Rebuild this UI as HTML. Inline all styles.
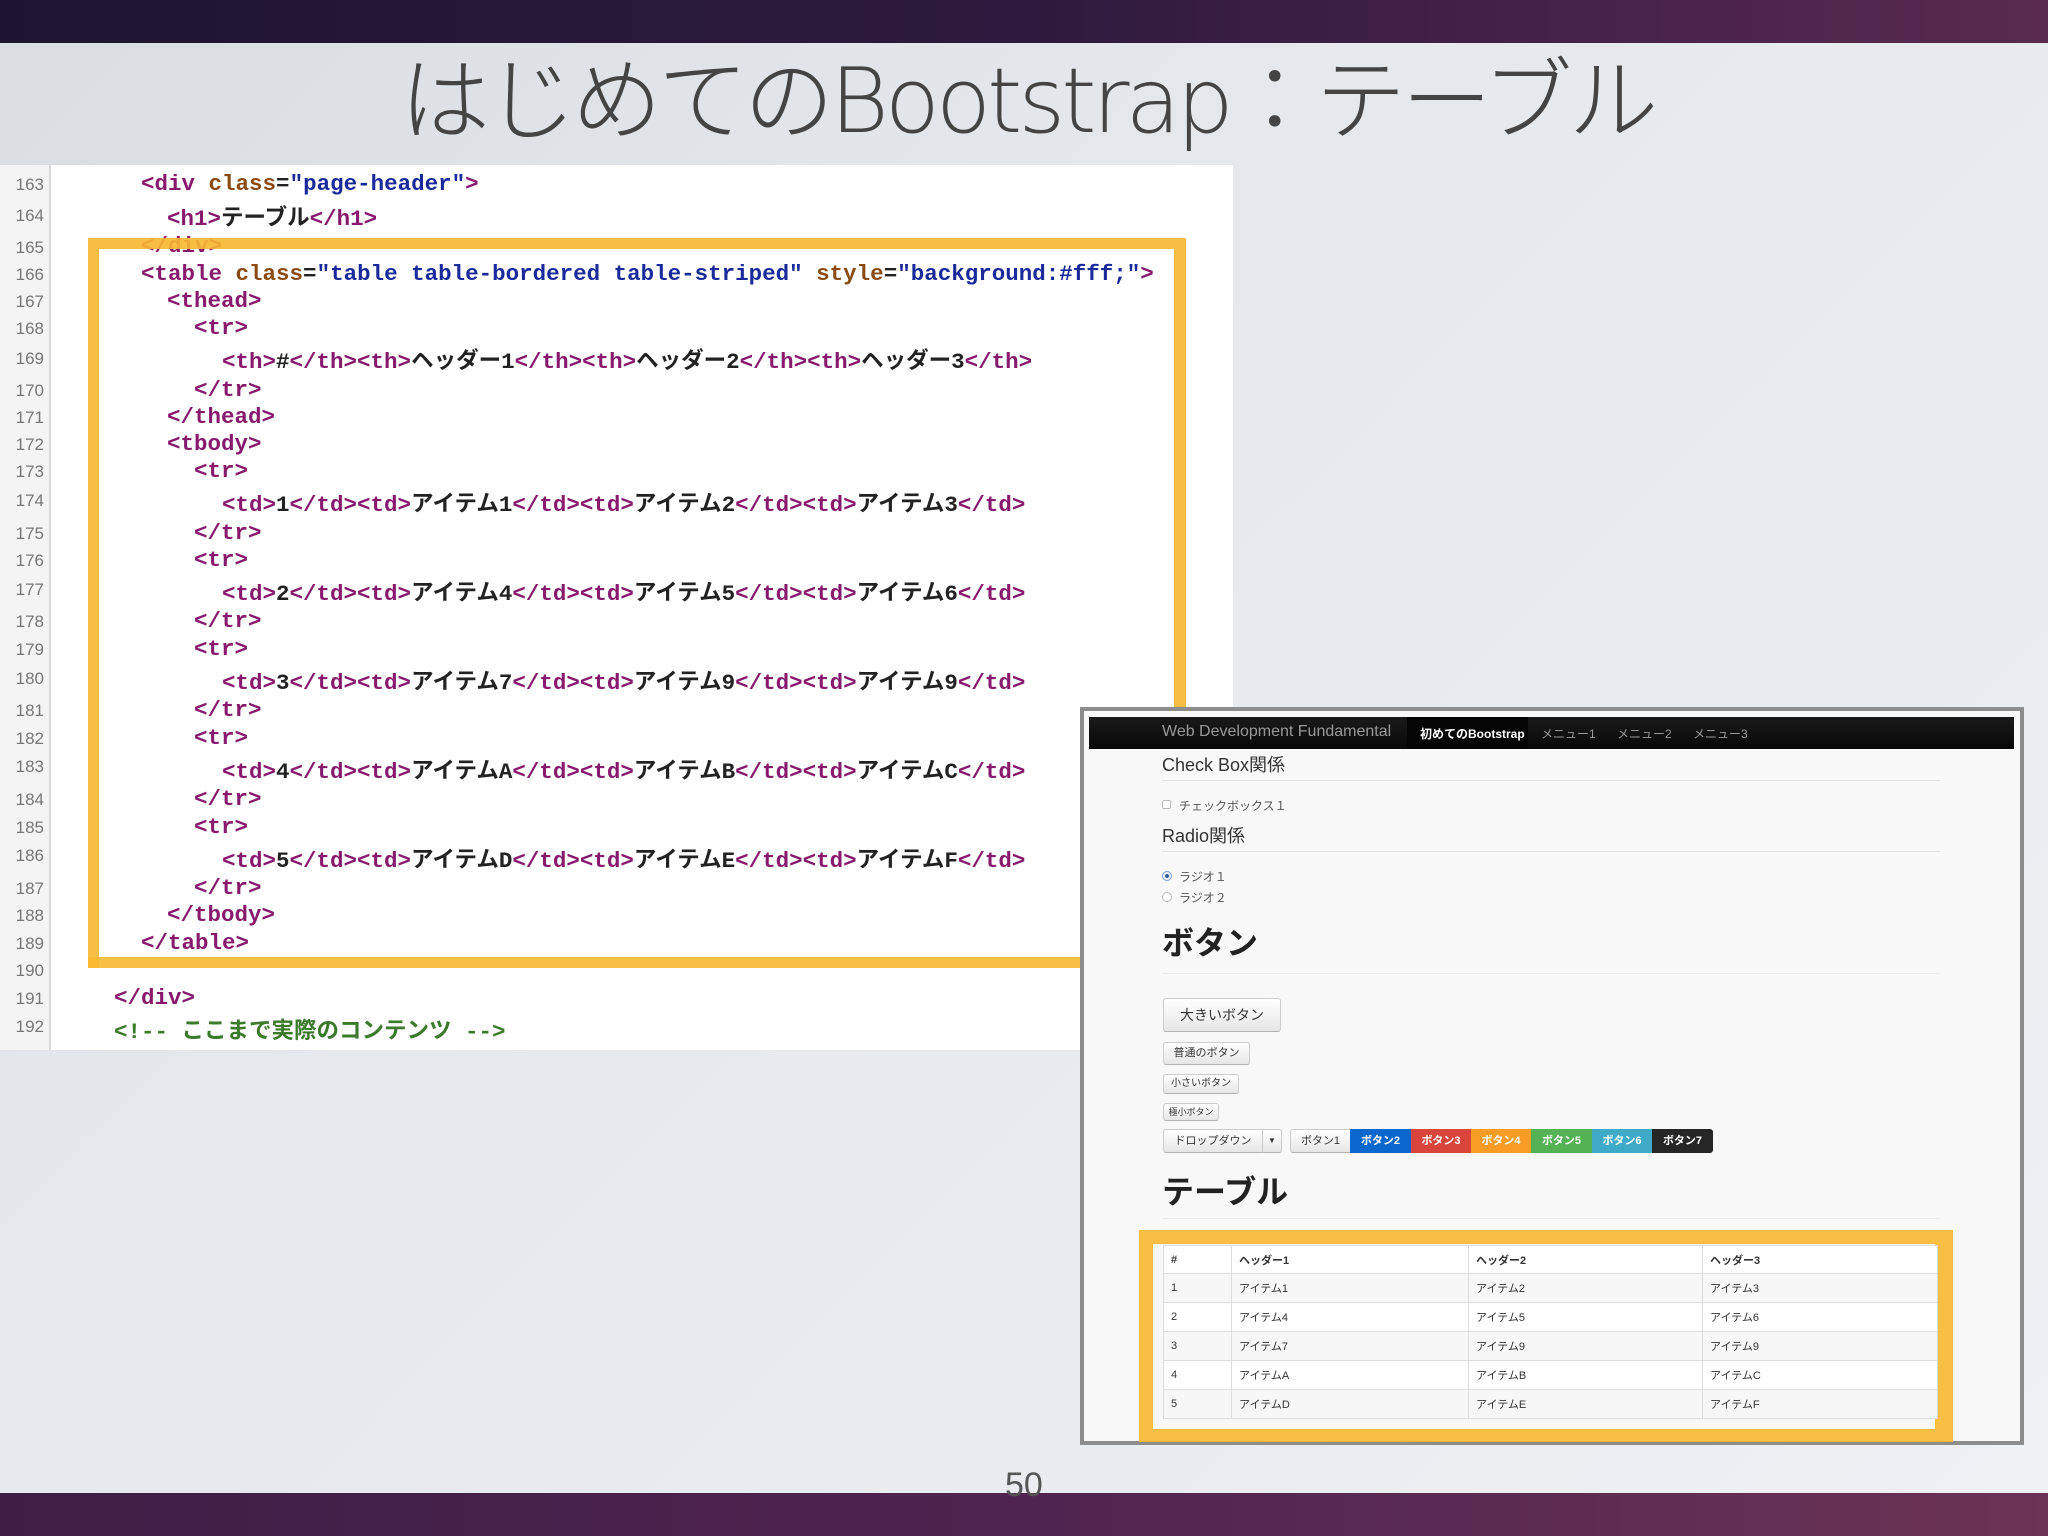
<!DOCTYPE html>
<html><head><meta charset="utf-8">
<style>
*{margin:0;padding:0;box-sizing:border-box}
body{width:2048px;height:1536px;position:relative;overflow:hidden;background:linear-gradient(135deg,#d9dde2 0%,#e6e9ec 40%,#eef0f2 100%);font-family:"Liberation Sans","Noto Sans CJK JP",sans-serif}
.top{position:absolute;left:0;top:0;width:2048px;height:43px;background:linear-gradient(90deg,#1d1530,#2e1a3e 50%,#5a2a50)}
.bot{position:absolute;left:0;top:1493px;width:2048px;height:43px;background:linear-gradient(90deg,#3d1f46,#4f2450 50%,#6b3355)}
.title{position:absolute;left:400px;top:42px;font-size:90px;font-weight:200;color:#444;white-space:nowrap;letter-spacing:-4px;font-family:"DejaVu Sans","Noto Sans CJK JP",sans-serif;line-height:120px}
.code{position:absolute;left:0;top:165px;width:1233px;height:885px;background:#fff}
.gut{position:absolute;left:0;top:165px;width:51px;height:885px;background:#f4f4f4;border-right:2px solid #d8d8d8}
.ln{position:absolute;left:0;width:44px;text-align:right;font:17px "Liberation Sans",sans-serif;color:#777}
.cl{position:absolute;white-space:pre;font:600 22.5px "Liberation Mono","Noto Sans CJK JP",monospace;color:#222;letter-spacing:0}
.t{color:#881a6e}.a{color:#8a4a12}.v{color:#1a2a9a}.c{color:#3a7a2a}
.hl{position:absolute;border:11px solid #f8b830;opacity:.9}
.inset{position:absolute;left:1080px;top:707px;width:944px;height:738px;background:#f8f8f9;border:4px solid #8d8d8d}
.nav{position:absolute;left:1089px;top:717px;width:925px;height:32px;background:linear-gradient(#1a1a1a,#080808)}
.nav span{position:absolute;top:7px;font-size:13px;color:#999;white-space:nowrap}
.h{position:absolute;left:1162px;color:#333;white-space:nowrap}
.hr{position:absolute;left:1162px;width:778px;height:1px;background:#e2e2e2}
.btn{position:absolute;background:linear-gradient(#fff,#e6e6e6);border:1px solid #ccc;border-bottom-color:#b3b3b3;border-radius:3px;color:#333;text-align:center;white-space:nowrap}
.bg{position:absolute;top:1129px;height:24px;font-size:11px;color:#fff;text-align:center;line-height:24px;font-weight:bold}
table{position:absolute;left:1163px;top:1245px;width:775px;border-collapse:collapse;background:#fff;font-size:11px;color:#333}
td,th{border:1px solid #ddd;text-align:left;padding:0 7px;height:29px}
th{height:28px}
tr.o td{background:#f7f7f7}
</style></head><body>
<div class="top"></div>
<div class="title">はじめてのBootstrap：テーブル</div>

<div class="code"></div>
<div class="gut"></div>
<div class="ln" style="top:175px">163</div>
<div class="ln" style="top:206px">164</div>
<div class="ln" style="top:238px">165</div>
<div class="ln" style="top:265px">166</div>
<div class="ln" style="top:292px">167</div>
<div class="ln" style="top:319px">168</div>
<div class="ln" style="top:349px">169</div>
<div class="ln" style="top:381px">170</div>
<div class="ln" style="top:408px">171</div>
<div class="ln" style="top:435px">172</div>
<div class="ln" style="top:462px">173</div>
<div class="ln" style="top:491px">174</div>
<div class="ln" style="top:524px">175</div>
<div class="ln" style="top:551px">176</div>
<div class="ln" style="top:580px">177</div>
<div class="ln" style="top:612px">178</div>
<div class="ln" style="top:640px">179</div>
<div class="ln" style="top:669px">180</div>
<div class="ln" style="top:701px">181</div>
<div class="ln" style="top:729px">182</div>
<div class="ln" style="top:757px">183</div>
<div class="ln" style="top:790px">184</div>
<div class="ln" style="top:818px">185</div>
<div class="ln" style="top:846px">186</div>
<div class="ln" style="top:879px">187</div>
<div class="ln" style="top:906px">188</div>
<div class="ln" style="top:934px">189</div>
<div class="ln" style="top:961px">190</div>
<div class="ln" style="top:989px">191</div>
<div class="ln" style="top:1017px">192</div>

<div class="cl" style="left:141px;top:171px"><span class="t">&lt;div</span> <span class="a">class</span>=<span class="v">"page-header"</span><span class="t">&gt;</span></div>
<div class="cl" style="left:167px;top:200px"><span class="t">&lt;h1&gt;</span>テーブル<span class="t">&lt;/h1&gt;</span></div>
<div class="cl" style="left:141px;top:233px"><span class="t">&lt;/div&gt;</span></div>
<div class="cl" style="left:141px;top:261px"><span class="t">&lt;table</span> <span class="a">class</span>=<span class="v">"table table-bordered table-striped"</span> <span class="a">style</span>=<span class="v">"background:#fff;"</span><span class="t">&gt;</span></div>
<div class="cl" style="left:167px;top:288px"><span class="t">&lt;thead&gt;</span></div>
<div class="cl" style="left:194px;top:315px"><span class="t">&lt;tr&gt;</span></div>
<div class="cl" style="left:222px;top:343px"><span class="t">&lt;th&gt;</span>#<span class="t">&lt;/th&gt;&lt;th&gt;</span>ヘッダー1<span class="t">&lt;/th&gt;&lt;th&gt;</span>ヘッダー2<span class="t">&lt;/th&gt;&lt;th&gt;</span>ヘッダー3<span class="t">&lt;/th&gt;</span></div>
<div class="cl" style="left:194px;top:377px"><span class="t">&lt;/tr&gt;</span></div>
<div class="cl" style="left:167px;top:404px"><span class="t">&lt;/thead&gt;</span></div>
<div class="cl" style="left:167px;top:431px"><span class="t">&lt;tbody&gt;</span></div>
<div class="cl" style="left:194px;top:458px"><span class="t">&lt;tr&gt;</span></div>
<div class="cl" style="left:222px;top:486px"><span class="t">&lt;td&gt;</span>1<span class="t">&lt;/td&gt;&lt;td&gt;</span>アイテム1<span class="t">&lt;/td&gt;&lt;td&gt;</span>アイテム2<span class="t">&lt;/td&gt;&lt;td&gt;</span>アイテム3<span class="t">&lt;/td&gt;</span></div>
<div class="cl" style="left:194px;top:520px"><span class="t">&lt;/tr&gt;</span></div>
<div class="cl" style="left:194px;top:547px"><span class="t">&lt;tr&gt;</span></div>
<div class="cl" style="left:222px;top:575px"><span class="t">&lt;td&gt;</span>2<span class="t">&lt;/td&gt;&lt;td&gt;</span>アイテム4<span class="t">&lt;/td&gt;&lt;td&gt;</span>アイテム5<span class="t">&lt;/td&gt;&lt;td&gt;</span>アイテム6<span class="t">&lt;/td&gt;</span></div>
<div class="cl" style="left:194px;top:608px"><span class="t">&lt;/tr&gt;</span></div>
<div class="cl" style="left:194px;top:636px"><span class="t">&lt;tr&gt;</span></div>
<div class="cl" style="left:222px;top:664px"><span class="t">&lt;td&gt;</span>3<span class="t">&lt;/td&gt;&lt;td&gt;</span>アイテム7<span class="t">&lt;/td&gt;&lt;td&gt;</span>アイテム9<span class="t">&lt;/td&gt;&lt;td&gt;</span>アイテム9<span class="t">&lt;/td&gt;</span></div>
<div class="cl" style="left:194px;top:697px"><span class="t">&lt;/tr&gt;</span></div>
<div class="cl" style="left:194px;top:725px"><span class="t">&lt;tr&gt;</span></div>
<div class="cl" style="left:222px;top:753px"><span class="t">&lt;td&gt;</span>4<span class="t">&lt;/td&gt;&lt;td&gt;</span>アイテムA<span class="t">&lt;/td&gt;&lt;td&gt;</span>アイテムB<span class="t">&lt;/td&gt;&lt;td&gt;</span>アイテムC<span class="t">&lt;/td&gt;</span></div>
<div class="cl" style="left:194px;top:786px"><span class="t">&lt;/tr&gt;</span></div>
<div class="cl" style="left:194px;top:814px"><span class="t">&lt;tr&gt;</span></div>
<div class="cl" style="left:222px;top:842px"><span class="t">&lt;td&gt;</span>5<span class="t">&lt;/td&gt;&lt;td&gt;</span>アイテムD<span class="t">&lt;/td&gt;&lt;td&gt;</span>アイテムE<span class="t">&lt;/td&gt;&lt;td&gt;</span>アイテムF<span class="t">&lt;/td&gt;</span></div>
<div class="cl" style="left:194px;top:875px"><span class="t">&lt;/tr&gt;</span></div>
<div class="cl" style="left:167px;top:902px"><span class="t">&lt;/tbody&gt;</span></div>
<div class="cl" style="left:141px;top:930px"><span class="t">&lt;/table&gt;</span></div>
<div class="cl" style="left:114px;top:985px"><span class="t">&lt;/div&gt;</span></div>
<div class="cl c" style="left:114px;top:1013px">&lt;!-- ここまで実際のコンテンツ --&gt;</div>

<div class="hl" style="left:88px;top:238px;width:1098px;height:730px;border-right-width:12px;border-bottom:none"></div>
<div style="position:absolute;left:88px;top:957px;width:998px;height:11px;background:#f8b830;opacity:.9"></div>

<div class="inset"></div>
<div class="nav">
<span style="left:73px;font-size:16px;top:6px">Web Development Fundamental</span>
<div style="position:absolute;left:318px;top:0;width:121px;height:32px;background:#050505"></div>
<span style="left:331px;color:#fff;font-weight:bold;font-size:12px;top:8px">初めてのBootstrap</span>
<span style="left:452px;font-size:12px;top:8px">メニュー1</span>
<span style="left:528px;font-size:12px;top:8px">メニュー2</span>
<span style="left:604px;font-size:12px;top:8px">メニュー3</span>
</div>
<div class="h" style="top:751px;font-size:18px">Check Box関係</div>
<div class="hr" style="top:780px"></div>
<div style="position:absolute;left:1162px;top:800px;width:9px;height:9px;border:1px solid #bbb;border-radius:2px;background:#fff"></div>
<div class="h" style="left:1179px;top:797px;font-size:12px;color:#555">チェックボックス１</div>
<div class="h" style="top:822px;font-size:18px">Radio関係</div>
<div class="hr" style="top:851px"></div>
<div style="position:absolute;left:1162px;top:871px;width:10px;height:10px;border:1px solid #7aa0d0;border-radius:50%;background:radial-gradient(#2a5a9a 30%,#e8f0fa 40%)"></div>
<div class="h" style="left:1179px;top:868px;font-size:12px;color:#555">ラジオ１</div>
<div style="position:absolute;left:1162px;top:892px;width:10px;height:10px;border:1px solid #bbb;border-radius:50%;background:#fff"></div>
<div class="h" style="left:1179px;top:889px;font-size:12px;color:#555">ラジオ２</div>
<div class="h" style="top:918px;font-size:32px;font-weight:bold;color:#222">ボタン</div>
<div class="hr" style="top:973px;background:#ececec"></div>
<div class="btn" style="left:1163px;top:998px;width:118px;height:34px;font-size:14px;line-height:32px">大きいボタン</div>
<div class="btn" style="left:1163px;top:1042px;width:87px;height:23px;font-size:11px;line-height:21px">普通のボタン</div>
<div class="btn" style="left:1163px;top:1074px;width:76px;height:20px;font-size:10px;line-height:18px">小さいボタン</div>
<div class="btn" style="left:1163px;top:1103px;width:56px;height:18px;font-size:9px;line-height:16px">極小ボタン</div>
<div class="btn" style="left:1163px;top:1129px;width:100px;height:24px;font-size:11px;line-height:22px;border-radius:3px 0 0 3px">ドロップダウン</div>
<div class="btn" style="left:1262px;top:1129px;width:20px;height:24px;font-size:8px;line-height:22px;border-radius:0 3px 3px 0">▼</div>
<div class="btn" style="left:1290px;top:1129px;width:61px;height:24px;font-size:11px;line-height:22px;border-radius:3px 0 0 3px">ボタン1</div>
<div class="bg" style="left:1350px;width:61px;background:#0b67cd">ボタン2</div>
<div class="bg" style="left:1411px;width:60px;background:#d9443b">ボタン3</div>
<div class="bg" style="left:1471px;width:60px;background:#f89c26">ボタン4</div>
<div class="bg" style="left:1531px;width:61px;background:#54b254">ボタン5</div>
<div class="bg" style="left:1592px;width:60px;background:#3fa9c8">ボタン6</div>
<div class="bg" style="left:1652px;width:61px;background:#262626;border-radius:0 3px 3px 0">ボタン7</div>
<div class="h" style="top:1167px;font-size:32px;font-weight:bold;color:#222">テーブル</div>
<div class="hr" style="top:1218px;background:#ececec"></div>
<div class="hl" style="left:1139px;top:1230px;width:814px;height:212px;border-width:14px 18px 13px 14px"></div>
<table>
<tr><th style="width:68px">#</th><th style="width:237px">ヘッダー1</th><th style="width:234px">ヘッダー2</th><th>ヘッダー3</th></tr>
<tr class="o"><td>1</td><td>アイテム1</td><td>アイテム2</td><td>アイテム3</td></tr>
<tr><td>2</td><td>アイテム4</td><td>アイテム5</td><td>アイテム6</td></tr>
<tr class="o"><td>3</td><td>アイテム7</td><td>アイテム9</td><td>アイテム9</td></tr>
<tr><td>4</td><td>アイテムA</td><td>アイテムB</td><td>アイテムC</td></tr>
<tr class="o"><td>5</td><td>アイテムD</td><td>アイテムE</td><td>アイテムF</td></tr>
</table>

<div class="bot"></div>
<div style="position:absolute;left:1005px;top:1466px;font-size:34px;color:#555;font-weight:300">50</div>
</body></html>
